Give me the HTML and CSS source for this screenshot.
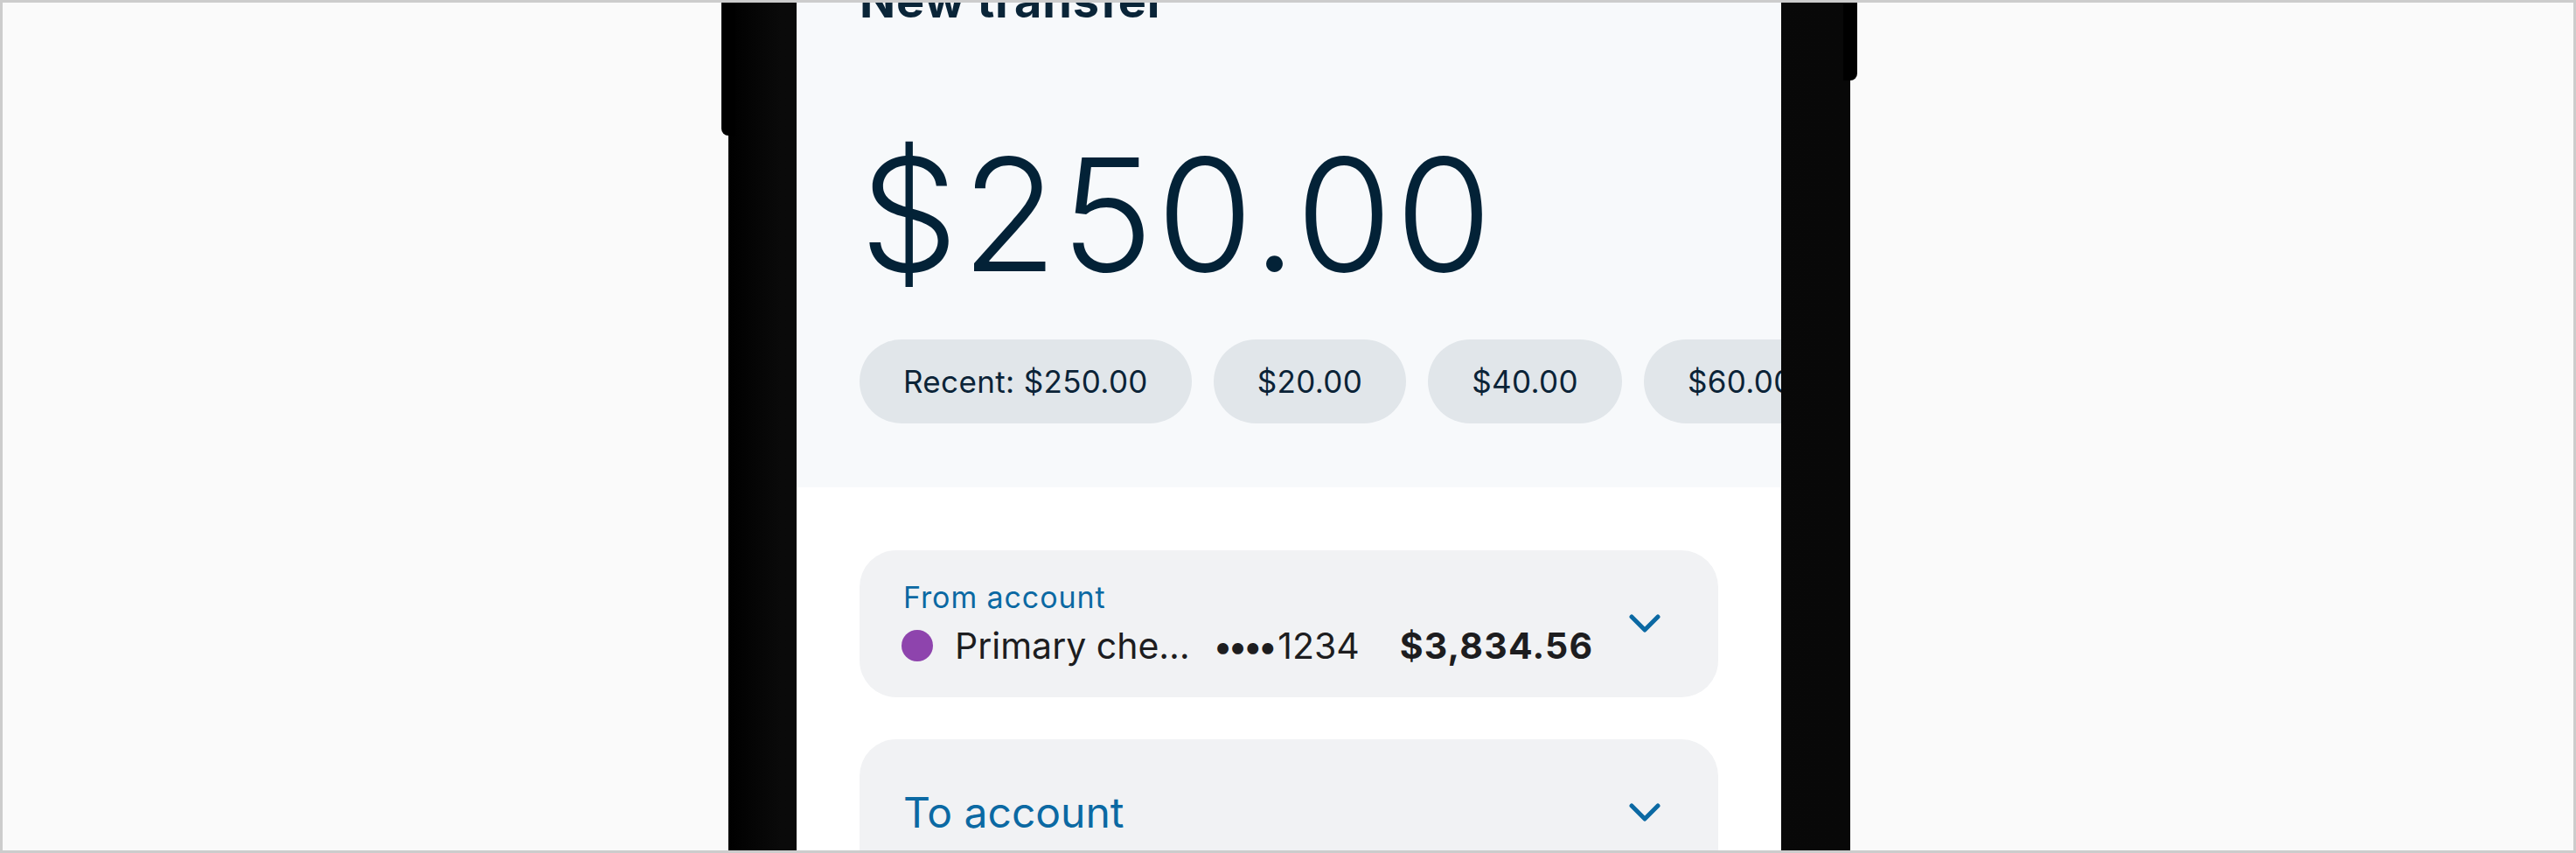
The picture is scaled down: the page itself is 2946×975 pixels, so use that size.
FILE: index.html
```html
<!DOCTYPE html>
<html lang="en">
<head>
<meta charset="utf-8">
<title>New transfer</title>
<link rel="stylesheet" href="styles.css">
</head>
<body>
<div class="page">
  <div class="phone">
    <span class="side-btn side-btn-left"></span>
    <span class="side-btn side-btn-right"></span>
    <main class="screen">
      <section class="hero">
        <h1 class="title">New transfer</h1>
        <div class="amount">$250.00</div>
        <div class="chips">
          <button class="chip">Recent: $250.00</button>
          <button class="chip">$20.00</button>
          <button class="chip">$40.00</button>
          <button class="chip">$60.00</button>
          <button class="chip">$100.00</button>
        </div>
      </section>
      <section class="accounts">
        <div class="field">
          <div class="field-body">
            <div class="field-label">From account</div>
            <div class="acct-row">
              <span class="acct-dot"></span>
              <span class="acct-name">Primary checking</span>
              <span class="acct-mask"><span class="mask-dots">••••</span>1234</span>
              <span class="acct-balance">$3,834.56</span>
            </div>
          </div>
          <svg class="chevron" viewBox="0 0 36 22" width="36" height="22" aria-hidden="true"><polyline points="3,3 18,18 33,3" fill="none" stroke="#0b69a3" stroke-width="5" stroke-linecap="round" stroke-linejoin="round"/></svg>
        </div>
        <div class="field">
          <div class="field-body">
            <div class="field-placeholder">To account</div>
          </div>
          <svg class="chevron" viewBox="0 0 36 22" width="36" height="22" aria-hidden="true"><polyline points="3,3 18,18 33,3" fill="none" stroke="#0b69a3" stroke-width="5" stroke-linecap="round" stroke-linejoin="round"/></svg>
        </div>
      </section>
    </main>
  </div>
</div>
</body>
</html>
```

FILE: styles.css
```css
html, body {
  margin: 0;
  padding: 0;
}

body {
  font-family: Inter, "Noto Sans", "Liberation Sans", sans-serif;
}

.page {
  width: 2946px;
  height: 975px;
  box-sizing: border-box;
  border: 3px solid #cccccc;
  background: #fafafa;
  overflow: hidden;
  display: flex;
  align-items: flex-start;
}

.phone {
  position: relative;
  margin-left: 830px;
  width: 1283px;
  height: 1400px;
  box-sizing: border-box;
  padding: 0 79px 0 78px;
  background: linear-gradient(90deg, #000000 0px, #0a0a0a 60px, #080808 1283px);
  display: flex;
}

.side-btn {
  position: absolute;
  width: 16px;
  background: #000;
}

.side-btn-left {
  left: -8px;
  top: -40px;
  height: 192px;
  border-radius: 0 0 0 8px;
}

.side-btn-right {
  right: -8px;
  top: -40px;
  height: 129px;
  border-radius: 0 0 8px 0;
}

.screen {
  width: 1126px;
  background: #ffffff;
  overflow: hidden;
  display: flex;
  flex-direction: column;
}

.hero {
  background: #f7f9fb;
  padding: 0 0 73px 72px;
  display: flex;
  flex-direction: column;
}

.title {
  margin: -34px 0 0 0;
  font-size: 54px;
  line-height: 64px;
  font-weight: 700;
  color: #0a2538;
  letter-spacing: 0.8px;
}

.amount {
  margin-top: 112px;
  font-size: 179px;
  line-height: 200px;
  font-weight: 300;
  color: #032237;
  letter-spacing: 3.5px;
}

.chips {
  margin-top: 43px;
  display: flex;
  gap: 25px;
  overflow: hidden;
}

.chip {
  flex: 0 0 auto;
  height: 96px;
  padding: 0 50px;
  border: none;
  border-radius: 48px;
  background: #e1e6ea;
  color: #0b2337;
  font-family: Inter, "Noto Sans", "Liberation Sans", sans-serif;
  font-size: 35px;
  line-height: 40px;
  font-weight: 400;
  letter-spacing: 0.35px;
}

.accounts {
  padding: 72px 72px;
  display: flex;
  flex-direction: column;
  gap: 48px;
}

.field {
  height: 168px;
  box-sizing: border-box;
  padding: 0 66px 0 48px;
  border-radius: 42px;
  background: #f1f2f4;
  display: flex;
  align-items: center;
  gap: 24px;
}

.field-body {
  flex: 1 1 auto;
  min-width: 0;
  display: flex;
  flex-direction: column;
  gap: 10px;
}

.field-label {
  padding-left: 2px;
  font-size: 34px;
  line-height: 40px;
  letter-spacing: 0.9px;
  color: #0b69a3;
}

.field-placeholder {
  padding-left: 2px;
  font-size: 48px;
  line-height: 58px;
  color: #0b69a3;
}

.acct-row {
  display: flex;
  align-items: center;
  font-size: 41px;
  line-height: 50px;
  color: #1d1d1f;
}

.acct-dot {
  flex: 0 0 auto;
  width: 36px;
  height: 36px;
  border-radius: 50%;
  background: #8e44ad;
  margin-right: 25px;
}

.acct-name {
  flex: 0 1 auto;
  max-width: 276px;
  white-space: nowrap;
  overflow: hidden;
  text-overflow: ellipsis;
}

.acct-mask {
  flex: 0 0 auto;
  margin-left: 19px;
  white-space: nowrap;
}

.mask-dots {
  letter-spacing: -6px;
  margin-right: 6px;
}

.acct-balance {
  flex: 0 0 auto;
  margin-left: 46px;
  font-weight: 700;
  letter-spacing: 1.2px;
  white-space: nowrap;
}

.chevron {
  flex: 0 0 auto;
  display: block;
}
```
